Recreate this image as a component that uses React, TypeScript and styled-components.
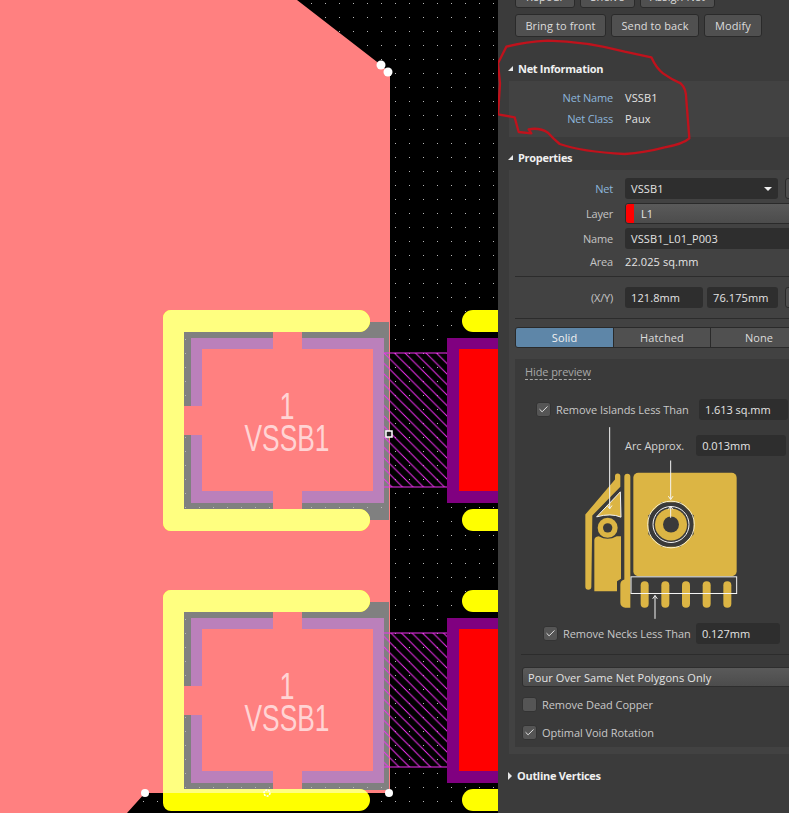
import React, { FC } from 'react';
import styled, { createGlobalStyle } from 'styled-components';
import { Check } from 'lucide-react';

const GlobalStyle = createGlobalStyle`
html, body { margin: 0; padding: 0; background: #000; }
body { font-family: "Open Sans", "Noto Sans", sans-serif; }
`;

const Page = styled.div`
display: flex;
width: 789px;
height: 813px;
overflow: hidden;
`;

//Canvas
const Board = styled.div`
flex: 0 0 498px;
height: 813px;
background: #000;
svg { display: block; }
`;

//Panel
const Panel = styled.div`
position: relative;
flex: 0 0 291px;
height: 813px;
overflow: hidden;
background: #3b3b3b;
color: #d8d8d8;
font-size: 11px;
letter-spacing: 0.1px;
`;

const ButtonRow = styled.div<{ $first?: boolean }>`
display: flex;
gap: 5px;
height: 23px;
padding-left: 17px;
margin-top: ${(p) => (p.$first ? '-15px' : '6px')};
`;

const PanelButton = styled.div<{ $w: number }>`
box-sizing: border-box;
width: ${(p) => p.$w}px;
height: 23px;
display: flex;
align-items: center;
justify-content: center;
background: #505050;
border: 1px solid #2a2a2a;
border-radius: 3px;
color: #dcdcdc;
white-space: nowrap;
`;

const SectionHeader = styled.div<{ $top?: number }>`
box-sizing: border-box;
display: flex;
align-items: center;
gap: 5px;
height: 23px;
margin-top: ${(p) => p.$top ?? 0}px;
padding: 0 0 2px 10px;
color: #f0f0f0;
font-weight: 700;
font-size: 11px;
letter-spacing: -0.3px;
`;

const OpenMark = styled.span`
width: 0;
height: 0;
border-left: 5px solid transparent;
border-bottom: 5px solid #e8e8e8;
`;

const ClosedMark = styled.span`
width: 0;
height: 0;
border-top: 4px solid transparent;
border-bottom: 4px solid transparent;
border-left: 4px solid #e8e8e8;
`;

const Section = styled.div`
margin-left: 11px;
padding: 6px 0 8px;
background: #424242;
`;

const PropsSection = styled(Section)`
height: 584px;
box-sizing: border-box;
padding: 8px 0 0;
`;

const InfoRow = styled.div`
display: flex;
align-items: center;
gap: 12px;
height: 21px;
`;

const FieldRow = styled.div<{ $gap?: number }>`
display: flex;
align-items: center;
gap: 12px;
height: 21px;
margin-bottom: ${(p) => p.$gap ?? 4}px;
`;

const Label = styled.div<{ $net?: boolean }>`
flex: 0 0 104px;
text-align: right;
letter-spacing: -0.2px;
color: ${(p) => (p.$net ? '#8db6dc' : '#c4c4c4')};
`;

const Value = styled.div`
color: #e4e4e4;
white-space: nowrap;
`;

const Field = styled.div<{ $w: number }>`
box-sizing: border-box;
flex: 0 0 ${(p) => p.$w}px;
height: 21px;
display: flex;
align-items: center;
justify-content: space-between;
padding: 0 6px;
background: #2e2e2e;
border-radius: 3px;
color: #e4e4e4;
white-space: nowrap;
`;

const Caret = styled.span`
width: 0;
height: 0;
border-left: 4px solid transparent;
border-right: 4px solid transparent;
border-top: 4px solid #f0f0f0;
`;

const Fields = styled.div`
display: flex;
flex: 0 0 auto;
gap: 4px;
`;

const SideButton = styled.div`
box-sizing: border-box;
flex: 0 0 24px;
height: 21px;
margin-left: -5px;
background: #4d4d4d;
border: 1px solid #2a2a2a;
border-radius: 3px;
`;

const LayerSelect = styled.div`
box-sizing: border-box;
flex: 0 0 190px;
height: 21px;
display: flex;
align-items: center;
gap: 7px;
background: linear-gradient(#5a5a5a, #4c4c4c);
border: 1px solid #2a2a2a;
border-radius: 3px;
color: #e4e4e4;
`;

const Swatch = styled.span`
width: 8px;
height: 19px;
background: #f00;
border-radius: 3px 0 0 3px;
`;

const Divider = styled.div<{ $left: number; $top: number; $bottom: number }>`
height: 1px;
background: #2c2c2c;
margin: ${(p) => p.$top}px 0 ${(p) => p.$bottom}px ${(p) => p.$left}px;
`;

const Segments = styled.div`
display: flex;
width: 290px;
height: 21px;
margin-left: 6px;
border: 1px solid #2a2a2a;
border-radius: 3px;
overflow: hidden;
box-sizing: border-box;
`;

const Segment = styled.div<{ $active?: boolean; $w: number }>`
flex: 0 0 ${(p) => p.$w}px;
display: flex;
align-items: center;
justify-content: center;
background: ${(p) => (p.$active ? '#5e86a8' : '#505050')};
color: ${(p) => (p.$active ? '#f0f0f0' : '#dcdcdc')};
border-right: 1px solid #2a2a2a;
box-sizing: border-box;
`;

const Preview = styled.div`
height: 388px;
margin: 11px 0 0 6px;
padding-top: 5px;
box-sizing: border-box;
background: #3a3a3a;
`;

const HideLink = styled.div`
display: inline-block;
margin-left: 10px;
line-height: 15px;
letter-spacing: -0.1px;
color: #a8a8a8;
border-bottom: 1px dashed #a8a8a8;
`;

const CheckRow = styled.div<{ $left: number; $top?: number; $h?: number }>`
display: flex;
align-items: center;
height: ${(p) => p.$h ?? 20}px;
margin-top: ${(p) => p.$top ?? 0}px;
padding-left: ${(p) => p.$left}px;
letter-spacing: -0.05px;
white-space: nowrap;
color: #c8c8c8;
`;

const CheckText = styled.span<{ $w: number }>`
flex: 0 0 ${(p) => p.$w}px;
`;

const Box = styled.span`
box-sizing: border-box;
flex: 0 0 15px;
height: 15px;
margin-right: 5px;
display: flex;
align-items: center;
justify-content: center;
background: #555;
border: 1px solid #333;
border-radius: 3px;
color: #f0f0f0;
`;

const Illustration = styled.div`
position: relative;
height: 204px;
svg { display: block; margin-left: 66px; padding-top: 7px; }
`;

const ArcRow = styled.div`
position: absolute;
top: 16px;
left: 110px;
display: flex;
align-items: center;
gap: 12px;
letter-spacing: -0.05px;
color: #d4d4d4;
white-space: nowrap;
`;

const PourSelect = styled.div`
box-sizing: border-box;
width: 280px;
height: 20px;
margin-left: 7px;
display: flex;
align-items: center;
padding-left: 5px;
background: linear-gradient(#5a5a5a, #4c4c4c);
border: 1px solid #2e2e2e;
border-radius: 3px;
color: #e4e4e4;
white-space: nowrap;
`;

//Annotation in red marker, over the panel
const Scribble = styled.svg`
position: absolute;
top: 0;
left: 0;
pointer-events: none;
`;

const Mark: FC<{ checked?: boolean }> = ({ checked }) => (
  <Box>{checked && <Check size={11} strokeWidth={2} />}</Box>
);

const GOLD = '#dcb544';
const PAD_YELLOW = '#ffff80';
const SALMON = '#ff8080';

const Pad: FC<{ y: number; cut?: boolean }> = ({ y, cut }) => {
  const arm = `M370 ${y} H171 a8 8 0 0 0 -8 8 V${y + 213} a8 8 0 0 0 8 8 H359 a11 11 0 0 0 0 -22 H184 V${y + 22} H359 a11 11 0 0 0 0 -22 Z`;
  return (
    <g>
      <path
        d={`M184 ${y + 22} H359 V${y + 12} H389 V${cut ? y + 200 : y + 210} H359 V${y + 199} H184 Z`}
        fill="#808080"
      />
      <rect x={184} y={y + 22} width={205} height={177} fill="url(#grid)" />
      <rect x={191} y={y + 28} width={193} height={165} fill="#bb80bb" />
      <rect x={202} y={y + 39} width={171} height={142} fill={SALMON} />
      <rect x={273} y={y + 22} width={29} height={17} fill={SALMON} />
      <rect x={273} y={y + 181} width={29} height={18} fill={SALMON} />
      <rect x={184} y={y + 96} width={18} height={29} fill={SALMON} />
      <path d={arm} fill="#ffff00" />
      <path d={arm} fill={PAD_YELLOW} clipPath="url(#pour)" />
      <text
        x={287}
        y={y + 109}
        textAnchor="middle"
        fontFamily="Liberation Sans"
        fontSize={36}
        fill="#ffd4d4"
        textLength={15}
        lengthAdjust="spacingAndGlyphs"
      >
        1
      </text>
      <text
        x={287}
        y={y + 141}
        textAnchor="middle"
        fontFamily="Liberation Sans"
        fontSize={36}
        fill="#ffd4d4"
        textLength={85}
        lengthAdjust="spacingAndGlyphs"
      >
        VSSB1
      </text>
      <rect x={384} y={y + 43} width={63} height={134} fill="url(#hatch)" />
      <path d={`M384 ${y + 43} H447 M384 ${y + 177} H447`} stroke="#f030f0" strokeWidth={1} />
      <rect x={447} y={y + 28} width={51} height={165} fill="#800080" />
      <rect x={459} y={y + 39} width={39} height={142} fill="#ff0000" />
      <path d={`M498 ${y} H473 a11 11 0 0 0 0 22 H498 Z`} fill="#ffff00" />
      <path d={`M498 ${y + 199} H473 a11 11 0 0 0 0 22 H498 Z`} fill="#ffff00" />
    </g>
  );
};

const PcbView: FC = () => (
  <svg width={498} height={813} viewBox="0 0 498 813">
    <defs>
      <pattern id="grid" x={3} y={3} width={14} height={14} patternUnits="userSpaceOnUse">
        <rect x={0} y={0} width={1} height={1} fill="#b8b8b8" />
      </pattern>
      <pattern id="hatch" x={384} y={353} width={10.5} height={10.5} patternUnits="userSpaceOnUse">
        <path d="M-2 -2 L12.5 12.5 M-2 8.5 L2 12.5 M8.5 -2 L12.5 2" stroke="#f030f0" strokeWidth={1} fill="none" />
      </pattern>
      <clipPath id="pour">
        <polygon points="0,0 297,0 381,65 390,73 390,793 145,793 127,813 0,813" />
      </clipPath>
    </defs>
    <rect x={0} y={0} width={498} height={813} fill="url(#grid)" />
    <polygon points="0,0 297,0 381,65 390,73 390,793 145,793 127,813 0,813" fill={SALMON} />
    <Pad y={310} />
    <Pad y={590} cut />
    <circle cx={381} cy={65} r={4.5} fill="#fff" />
    <circle cx={388} cy={72} r={4.5} fill="#fff" />
    <rect x={386} y={431} width={6} height={6} fill="#222" stroke="#fff" strokeWidth={1.5} />
    <circle cx={145} cy={793} r={4} fill="#fff" />
    <circle cx={267} cy={793} r={3} fill="none" stroke="#fff" strokeWidth={1.5} strokeDasharray="2 1" />
    <circle cx={389} cy={793} r={4} fill="#fff" />
  </svg>
);

//Coordinates in this drawing are 3x the page pixels
const PourDiagram: FC = () => (
  <svg width={160} height={197} viewBox="250 110 480 590">
    <rect x={407} y={250} width={310} height={310} rx={15} fill={GOLD} />
    <path d="M380 262 a9 9 0 0 1 18 0 V655 H383 a15 15 0 0 1 -15 -15 V585 q0 -12 12 -15 Z" fill={GOLD} />
    <path d="M263 375 L352 270 V260 a8 8 0 0 1 16 0 V292 L284 378 L281 592 a9 9 0 0 1 -18 0 Z" fill={GOLD} />
    <path d="M297 382 L368 307 L370 383 Q340 370 297 382 Z" fill={GOLD} stroke="#f4f4f4" strokeWidth={3} />
    <circle cx={330} cy={415} r={30} fill={GOLD} />
    <circle cx={330} cy={415} r={14} fill="#3a3a3a" />
    <path d="M303 440 Q330 455 357 440 H370 V568 L358 575 V605 H290 V452 Q290 442 303 440 Z" fill={GOLD} />
    <polygon points="492,338 548,338 588,378 588,434 548,472 492,472 452,434 452,378" fill="#3a3a3a" />
    <circle cx={520} cy={405} r={48} fill={GOLD} />
    <circle cx={520} cy={405} r={24} fill="#3a3a3a" />
    <circle cx={520} cy={405} r={70} fill="none" stroke="#f6efcf" strokeWidth={3} />
    <circle cx={520} cy={405} r={54} fill="none" stroke="#f4f4f4" strokeWidth={3} />
    {[429, 491, 553, 615, 677].map((x) => (
      <rect key={x} x={x} y={575} width={24} height={80} rx={12} fill={GOLD} />
    ))}
    <rect x={400} y={562} width={317} height={50} fill="none" stroke="#f4f4f4" strokeWidth={3} />
    <g stroke="#f4f4f4" strokeWidth={3} fill="none">
      <path d="M336 113 V358 M329 348 L336 358 L343 348" />
      <path d="M519 213 V330 M512 320 L519 330 L526 320" />
      <path d="M519 385 V350 M512 360 L519 350 L526 360" />
      <path d="M472 688 V618 M465 628 L472 618 L479 628" />
    </g>
  </svg>
);

const App: FC = () => (
  <Page>
    <GlobalStyle />
    <Board>
      <PcbView />
    </Board>
    <Panel>
      <ButtonRow $first>
        <PanelButton $w={60}>Repour</PanelButton>
        <PanelButton $w={55}>Shelve</PanelButton>
        <PanelButton $w={75}>Assign Net</PanelButton>
      </ButtonRow>
      <ButtonRow>
        <PanelButton $w={91}>Bring to front</PanelButton>
        <PanelButton $w={88}>Send to back</PanelButton>
        <PanelButton $w={58}>Modify</PanelButton>
      </ButtonRow>

      <SectionHeader $top={21}>
        <OpenMark />
        Net Information
      </SectionHeader>
      <Section>
        <InfoRow>
          <Label $net>Net Name</Label>
          <Value>VSSB1</Value>
        </InfoRow>
        <InfoRow>
          <Label $net>Net Class</Label>
          <Value>Paux</Value>
        </InfoRow>
      </Section>

      <SectionHeader $top={10}>
        <OpenMark />
        Properties
      </SectionHeader>
      <PropsSection>
        <FieldRow>
          <Label $net>Net</Label>
          <Field $w={153}>
            VSSB1
            <Caret />
          </Field>
          <SideButton />
        </FieldRow>
        <FieldRow>
          <Label>Layer</Label>
          <LayerSelect>
            <Swatch />
            L1
          </LayerSelect>
        </FieldRow>
        <FieldRow $gap={2}>
          <Label>Name</Label>
          <Field $w={190}>VSSB1_L01_P003</Field>
        </FieldRow>
        <FieldRow $gap={1}>
          <Label>Area</Label>
          <Value>22.025 sq.mm</Value>
        </FieldRow>
        <Divider $left={6} $top={4} $bottom={10} />
        <FieldRow $gap={0}>
          <Label>(X/Y)</Label>
          <Fields>
            <Field $w={78}>121.8mm</Field>
            <Field $w={71}>76.175mm</Field>
          </Fields>
          <SideButton />
        </FieldRow>
        <Divider $left={6} $top={10} $bottom={8} />
        <Segments>
          <Segment $active $w={98}>Solid</Segment>
          <Segment $w={97}>Hatched</Segment>
          <Segment $w={97}>None</Segment>
        </Segments>

        <Preview>
          <HideLink>Hide preview</HideLink>
          <CheckRow $left={21} $top={19}>
            <Mark checked />
            <CheckText $w={143}>Remove Islands Less Than</CheckText>
            <Field $w={89}>1.613 sq.mm</Field>
          </CheckRow>
          <Illustration>
            <PourDiagram />
            <ArcRow>
              Arc Approx.
              <Field $w={90}>0.013mm</Field>
            </ArcRow>
          </Illustration>
          <CheckRow $left={28} $h={21}>
            <Mark checked />
            <CheckText $w={133}>Remove Necks Less Than</CheckText>
            <Field $w={84}>0.127mm</Field>
          </CheckRow>
          <Divider $left={6} $top={10} $bottom={12} />
          <PourSelect>Pour Over Same Net Polygons Only</PourSelect>
          <CheckRow $left={7} $top={7}>
            <Mark />
            Remove Dead Copper
          </CheckRow>
          <CheckRow $left={7} $top={8}>
            <Mark checked />
            Optimal Void Rotation
          </CheckRow>
        </Preview>
      </PropsSection>

      <SectionHeader $top={11}>
        <ClosedMark />
        Outline Vertices
      </SectionHeader>

      <Scribble width={291} height={170} viewBox="0 0 873 510">
        <path
          d="M25 140 Q80 126 150 122 Q260 124 380 155 L460 172 Q475 205 495 220 Q520 238 548 250 Q565 265 565 300 L574 415 Q555 432 500 442 Q440 458 380 462 Q250 455 185 432 Q165 415 150 398 Q125 382 92 388 L100 400 L62 396 L50 352 L0 343 L6 250 L0 190 Z"
          fill="none"
          stroke="#c0121c"
          strokeWidth={7}
          strokeLinejoin="round"
        />
      </Scribble>
    </Panel>
  </Page>
);

export default App;
